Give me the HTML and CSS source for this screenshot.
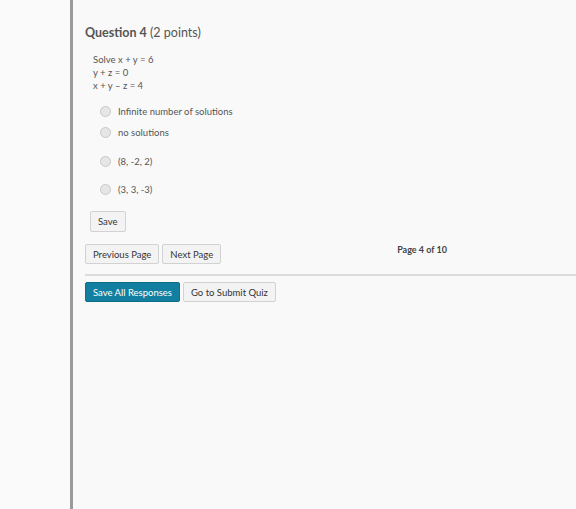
FILE: index.html
```html
<!DOCTYPE html>
<html lang="en">
  <head>
    <meta charset="UTF-8" />
    <title>Quiz</title>
    <link rel="stylesheet" href="styles.css">
  </head>
  <body>
    <div class="page">
      <div class="side"></div>
      <div class="main">
        <div class="question">
          <h2 class="qtitle"><b>Question 4</b> (2 points)</h2>
          <div class="qtext">
            <div>Solve x + y = 6</div>
            <div>y + z = 0</div>
            <div>x + y &ndash; z = 4</div>
          </div>
          <ul class="answers">
            <li><span class="radio"></span>Infinite number of solutions</li>
            <li><span class="radio"></span>no solutions</li>
            <li class="tall"><span class="radio"></span>(8, -2, 2)</li>
            <li class="tall"><span class="radio"></span>(3, 3, -3)</li>
          </ul>
          <button class="btn save">Save</button>
        </div>
        <div class="pager">
          <div class="pbtns">
            <button class="btn">Previous Page</button>
            <button class="btn">Next Page</button>
          </div>
          <div class="pnum">Page 4 of 10</div>
        </div>
        <div class="submit">
          <button class="btn primary">Save All Responses</button>
          <button class="btn">Go to Submit Quiz</button>
        </div>
      </div>
    </div>
  </body>
</html>
```
FILE: styles.css
```css
body {
  margin: 0;
  background: #f9f9f9;
  font-family: Lato, "Liberation Sans", sans-serif;
  color: #555;
}
.page {
  display: flex;
  min-height: 509px;
}
.side {
  width: 70px;
  background: #fafafa;
  border-right: 3px solid #9a9a9a;
}
.main {
  flex: 1;
  padding-left: 12px;
}
.question {
  padding-top: 24px;
}
.qtitle {
  margin: 0;
  font-size: 12.5px;
  font-weight: normal;
  line-height: 17px;
  color: #555;
}
.qtitle b {
  font-weight: bold;
}
.qtext {
  margin-top: 12px;
  padding-left: 8px;
  font-size: 9.5px;
  line-height: 13px;
  color: #555;
}
.answers {
  list-style: none;
  margin: 9px 0 0;
  padding: 0 0 0 15px;
}
.answers li {
  display: flex;
  align-items: center;
  height: 21px;
  font-size: 9.5px;
  color: #555;
}
.answers li.tall {
  height: 28px;
  padding-top: 8px;
  box-sizing: border-box;
}
.radio {
  width: 9px;
  height: 9px;
  border-radius: 50%;
  border: 1px solid #c8c8c8;
  background: #e6e6e6;
  margin-right: 7px;
}
.btn {
  font-family: Lato, "Liberation Sans", sans-serif;
  font-size: 9.5px;
  color: #333;
  background: #f3f3f3;
  border: 1px solid #d2d2d2;
  border-radius: 2px;
  height: 20px;
  padding: 0 7px;
  margin: 0;
}
.save {
  margin: 12px 0 0 5px;
  height: 21px;
}
.pager {
  display: flex;
  margin-top: 12px;
  padding-bottom: 10px;
  border-bottom: 2px solid #dcdcdc;
}
.pbtns {
  display: flex;
  gap: 3px;
}
.pnum {
  margin-left: 176px;
  font-size: 9px;
  font-weight: bold;
  color: #444;
  padding-top: 0;
}
.submit {
  display: flex;
  gap: 3px;
  margin-top: 6px;
}
.primary {
  background: #127fa0;
  border-color: #0e6f8c;
  color: #fff;
}
```
